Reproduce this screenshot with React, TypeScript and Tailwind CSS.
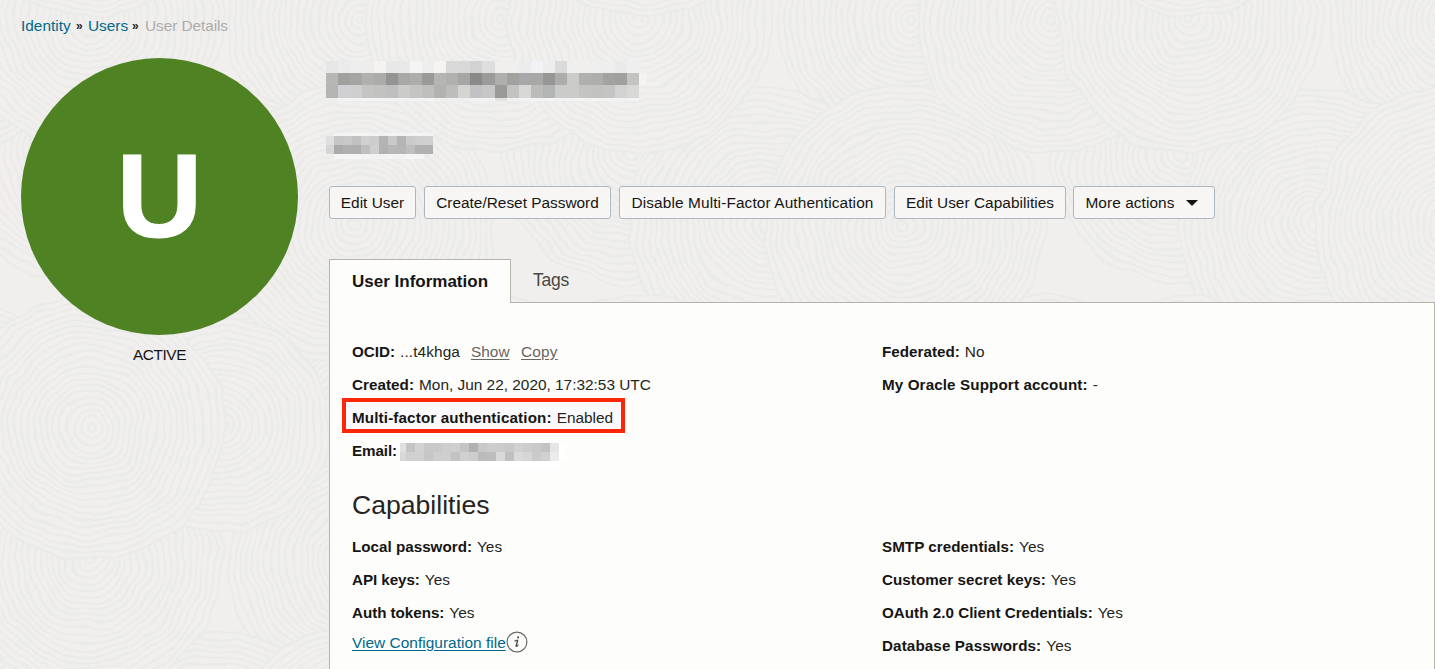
import type { ReactNode } from "react";

/* ---------- swirl background ---------- */

const TILE_W = 550;
const TILE_H = 542;
const SWIRLS: [number, number, number][] = [
  [500, 427, 130],
  [355, 427, 130],
  [80, 155, 128],
  [360, 20, 132],
  [215, 225, 136],
  [355, 225, 140],
  [500, 20, 132],
  [90, 20, 132],
  [223, 425, 106],
  [90, 427, 132],
];

function Swirls() {
  const circles: ReactNode[] = [];
  SWIRLS.forEach(([x, y, r], s) => {
    for (let i = -1; i <= 3; i++) {
      for (let j = -1; j <= 1; j++) {
        const cx = x + i * TILE_W;
        const cy = y + j * TILE_H;
        const rings: ReactNode[] = [];
        for (let k = r; k > 3; k -= 6.4) {
          rings.push(
            <circle key={k} cx={cx} cy={cy} r={k} fill={k === r ? "#f0efee" : "none"} stroke="#eaeae9" strokeWidth="2" />,
          );
        }
        circles.push(<g key={`${s}:${i}:${j}`}>{rings}</g>);
      }
    }
  });
  return (
    <svg className="absolute inset-0 -z-10" width="1435" height="669" aria-hidden="true">
      <filter id="wobble" x="0" y="0" width="1435" height="669" filterUnits="userSpaceOnUse" colorInterpolationFilters="sRGB">
        <feTurbulence type="fractalNoise" baseFrequency="0.025" numOctaves="2" seed="4" result="noise" />
        <feDisplacementMap in="SourceGraphic" in2="noise" scale="14" xChannelSelector="R" yChannelSelector="G" />
        <feGaussianBlur stdDeviation="0.4" />
      </filter>
      <g filter="url(#wobble)">{circles}</g>
    </svg>
  );
}

/* ---------- redacted values ---------- */

type Row = { y: number; h: number; first: number; cell: number; x?: number; colors: string };

function Mosaic({ width, height, rows, className }: { width: number; height: number; rows: Row[]; className?: string }) {
  return (
    <svg width={width} height={height} className={className} shapeRendering="crispEdges" aria-hidden="true">
      {rows.map((row, n) =>
        row.colors.split(" ").map((c, i) => (
          <rect
            key={`${n}:${i}`}
            x={(row.x ?? 0) + (i === 0 ? 0 : row.first + (i - 1) * row.cell)}
            y={row.y}
            width={i === 0 ? row.first : row.cell}
            height={row.h}
            fill={c.length === 2 ? `#${c}${c}${c}` : `#${c}`}
          />
        )),
      )}
    </svg>
  );
}

const NAME_ROWS: Row[] = [
  { y: 0, h: 12, first: 12, cell: 12.04, colors: "e6 eb ee ed f4f3f1 e8 e9 f5f4f2 ee f5f4f2 d9 d8 d2 de f0efee f0efee ec f2f1f3 ed da f0efee f0efee ef ee ea ef" },
  { y: 12, h: 12, first: 12, cell: 12.04, colors: "b6b6b5 a0a09e a5a5a3 b0b0af acacaa 949492 a8a8a7 adadac 9a9a98 b5b5b4 b0b0af a6a6a4 8a8a89 9b9b99 afafae a1a1a0 a7a8a9 a8a8a7 979795 adadab cbcbca b0b0af aeaead a3a3a1 a0a09e c3c3c2" },
  { y: 24, h: 13, first: 12, cell: 12.04, colors: "b4b4b3 d0cfd1 d0cfd0 c4c4c3 c2c2c1 bfbec0 cbcbca c5c5c4 bfbfbd b2b2b0 bdbdbc d4d4d3 c2c1c4 c7c7c7 9a9a98 c3c3c2 d8d8d7 bcbcbb b3b4b5 cbcbca cbcbca c4c4c3 c2c2c1 c4c4c3 d3d2d3 d8d8d7" },
  { y: 37, h: 3, first: 12, cell: 12.04, colors: "ee f3 f3 f4 f4 f3 f2 f3 f4 f1 f0 ee f3 f3 e2 f1 f2 f4 f4 f3 f3 f4 f4 f3 f2 f3" },
  { y: 12, h: 12, x: 313, first: 8, cell: 8, colors: "f4f3f1" },
];

const SUBTITLE_ROWS: Row[] = [
  { y: 0, h: 3, x: 8, first: 9, cell: 9, colors: "f4 f4 f4 f4 f4 f2 f4 f3 f4 f4 f3" },
  { y: 3, h: 9, first: 8, cell: 9, colors: "df c6 c8 c1 d0cfd1 cd b3 c9 b5 cb cfced0 d0" },
  { y: 12, h: 9, first: 8, cell: 9, colors: "d5 aa af ae bf cf b2 b8 b6 bf b1 b1" },
  { y: 21, h: 5, x: 8, first: 9, cell: 9, colors: "f5 f5 f5 f4 f2 f3 f5 f4 f5 f5" },
];

const EMAIL_ROWS: Row[] = [
  { y: 0, h: 9, first: 6, cell: 9, colors: "e0 c4 d2 c8 c9 cd cf c4 b1 c8 cc cb c9 d1 cd c9 c2 e5" },
  { y: 9, h: 9, first: 6, cell: 9, colors: "d8 d0 d0 c6 ce cf c3 d0 cd bb bd d9 c0 da d6 cb d0 eb" },
  { y: 18, h: 8, first: 160, cell: 9, colors: "ff" },
  { y: 0, h: 18, x: 159, first: 7, cell: 7, colors: "ff" },
];

/* ---------- building blocks ---------- */

function ActionButton({ className, children }: { className: string; children: ReactNode }) {
  return (
    <button
      className={`flex h-[33px] shrink-0 items-center justify-center rounded-[3px] border border-[#aeb8c2] bg-[#f7f6f4] whitespace-nowrap text-[#161513] ${className}`}
    >
      {children}
    </button>
  );
}

function Field({ label, tracking = "tracking-[0.12px]", children }: { label: string; tracking?: string; children: ReactNode }) {
  return (
    <div className="flex h-[33px] items-center whitespace-nowrap">
      <span className={`mr-[5px] text-[15.2px] font-bold text-[#161513] ${tracking}`}>{label}</span>
      {children}
    </div>
  );
}

function InfoIcon() {
  return (
    <svg width="22" height="22" viewBox="0 0 22 22" fill="none" className="mb-[2px]" aria-label="Info">
      <circle cx="11" cy="11" r="9.9" stroke="#6b6966" strokeWidth="1.2" />
      <circle cx="12.1" cy="6.3" r="1.1" fill="#55524f" />
      <path d="M9 9.9c1-.1 1.7-.4 2.7-.7l-1.6 5.6c-.2.9.8.6 1.9-.7" stroke="#55524f" strokeWidth="1.3" strokeLinecap="round" strokeLinejoin="round" />
    </svg>
  );
}

export default function App() {
  return (
    <div className="relative isolate flex h-[669px] w-[1435px] flex-col overflow-hidden bg-[#f0efee] font-['Liberation_Sans',Arial,sans-serif] text-[15.4px] leading-[20px] tracking-[0px] text-[#252422]">
      <Swirls />

      <nav className="flex h-[58px] shrink-0 items-start pt-[16px] pl-[21px] whitespace-nowrap">
        <a className="w-[55px] text-[#00688c]">Identity</a>
        <span className="w-[12px] text-[12px] font-bold">»</span>
        <a className="w-[44px] text-[#00688c]">Users</a>
        <span className="w-[13px] text-[12px] font-bold">»</span>
        <span className="tracking-[-0.07px] text-[#adacab]">User Details</span>
      </nav>

      <div className="flex min-h-0 flex-1">
        <aside className="flex w-[329px] shrink-0 flex-col pl-[21px]">
          <div className="flex size-[277px] items-center justify-center rounded-full bg-[#4f8223] pb-[2px] text-[119px] leading-none font-bold text-white [-webkit-text-stroke:1px_white]">
            U
          </div>
          <p className="mt-[10px] w-[277px] text-center tracking-[-0.4px] text-[#161513]">ACTIVE</p>
        </aside>

        <main className="flex min-w-0 flex-1 flex-col">
          <Mosaic width={321} height={40} rows={NAME_ROWS} className="mt-[3px] -ml-[3px] shrink-0" />
          <Mosaic width={116} height={26} rows={SUBTITLE_ROWS} className="mt-[32px] -ml-[3px] shrink-0" />

          <div className="mt-[27px] flex shrink-0 gap-2">
            <ActionButton className="w-[87px]">Edit User</ActionButton>
            <ActionButton className="w-[187px]">Create/Reset Password</ActionButton>
            <ActionButton className="w-[267px] tracking-[0.12px]">Disable Multi-Factor Authentication</ActionButton>
            <ActionButton className="w-[172px] tracking-[0.04px]">Edit User Capabilities</ActionButton>
            <ActionButton className="-ml-px w-[142px] gap-[11px] pr-[5px] tracking-[0.08px]">
              More actions
              <svg width="12" height="6" viewBox="0 0 12 6" aria-hidden="true">
                <path d="M0 0h12L6 6z" fill="#161513" />
              </svg>
            </ActionButton>
          </div>

          <div className="z-10 mt-[40px] -mb-px flex h-[44px] shrink-0">
            <div className="flex w-[182px] items-center border border-b-0 border-[#b7b2aa] bg-[#fdfdfb] pl-[22px] text-[17px] font-bold text-[#161513]">
              User Information
            </div>
            <div className="flex items-center pb-[2px] pl-[22px] text-[17.5px] tracking-[-0.2px] text-[#4a4845]">Tags</div>
          </div>

          <section className="flex flex-1 flex-col border border-b-0 border-[#b7b2aa] bg-[#fdfdfb] pt-[32px] pl-[22px]">
            <div className="flex h-[132px] shrink-0">
              <div className="w-[530px]">
                <Field label="OCID:" tracking="tracking-[0px]">
                  <span className="w-[71px] tracking-[0.1px]">...t4khga</span>
                  <a className="w-[50px] text-[#6b6560] underline underline-offset-2">Show</a>
                  <a className="text-[#6b6560] underline underline-offset-2 tracking-[0.2px]">Copy</a>
                </Field>
                <Field label="Created:" tracking="tracking-[0.05px]">
                  Mon, Jun 22, 2020, 17:32:53 UTC
                </Field>
                <div className="relative isolate">
                  <div className="absolute -top-[3px] -left-[10px] -z-10 h-[35px] w-[283px] border-4 border-[#fb2708] bg-[#fafafd]" />
                  <Field label="Multi-factor authentication:" tracking="tracking-[0.14px]">
                    Enabled
                  </Field>
                </div>
                <div className="flex">
                  <Field label="Email:" tracking="tracking-[-0.1px]">
                    {null}
                  </Field>
                  <Mosaic width={166} height={26} rows={EMAIL_ROWS} className="mt-[9px] -ml-[2px]" />
                </div>
              </div>
              <div>
                <Field label="Federated:" tracking="tracking-[0.02px]">
                  No
                </Field>
                <Field label="My Oracle Support account:">-</Field>
              </div>
            </div>

            <h2 className="mt-[22px] h-[32px] shrink-0 text-[26.6px] leading-[32px]">Capabilities</h2>

            <div className="mt-[9px] flex">
              <div className="w-[530px]">
                <Field label="Local password:" tracking="tracking-[0.01px]">Yes</Field>
                <Field label="API keys:" tracking="tracking-[-0.06px]">Yes</Field>
                <Field label="Auth tokens:" tracking="tracking-[-0.04px]">Yes</Field>
                <div className="flex h-[28px] items-center">
                  <a className="text-[#00688c] underline underline-offset-2 tracking-[0.04px]">View Configuration file</a>
                  <InfoIcon />
                </div>
              </div>
              <div>
                <Field label="SMTP credentials:" tracking="tracking-[0.04px]">Yes</Field>
                <Field label="Customer secret keys:" tracking="tracking-[0.04px]">Yes</Field>
                <Field label="OAuth 2.0 Client Credentials:" tracking="tracking-[0.02px]">Yes</Field>
                <Field label="Database Passwords:" tracking="tracking-[0.12px]">Yes</Field>
              </div>
            </div>
          </section>
        </main>
      </div>
    </div>
  );
}
